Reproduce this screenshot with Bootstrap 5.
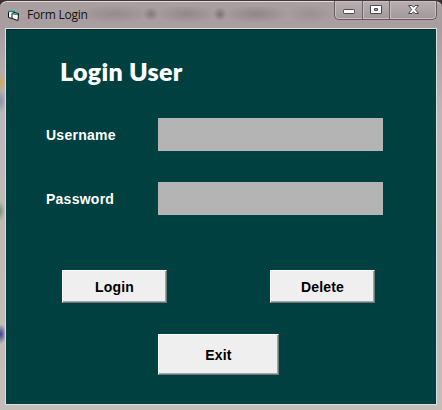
<!DOCTYPE html>
<html lang="en">
<head>
<meta charset="utf-8">
<meta name="viewport" content="width=device-width, initial-scale=1">
<title>Form Login</title>
<link href="https://cdn.jsdelivr.net/npm/bootstrap@5.3.0/dist/css/bootstrap.min.css" rel="stylesheet">
<style>
  body { width: 442px; height: 410px; background: #3b3032; font-family: "Liberation Sans", Arial, sans-serif; }
  .form-window {
    width: 442px; height: 410px; padding: 0 5px 5px; border-top: 1px solid #40373a;
    border-radius: 7px 7px 0 0; box-shadow: inset 0 1px 0 #e4dcdc;
    background:
      radial-gradient(ellipse 5px 9px at 0 82px, #d8a545, transparent),
      radial-gradient(ellipse 5px 10px at 0 210px, #7a9474, transparent),
      radial-gradient(ellipse 5px 10px at 1px 333px, #40428c, transparent),
      radial-gradient(ellipse 5px 12px at 1px 100px, #9093a5, transparent),
      radial-gradient(ellipse 38px 9px at 115px 13px, #958b8d, transparent),
      radial-gradient(ellipse 8px 7px at 151px 13px, #827879, transparent),
      radial-gradient(ellipse 32px 9px at 186px 13px, #928889, transparent),
      radial-gradient(ellipse 7px 7px at 220px 13px, #7c7273, transparent),
      radial-gradient(ellipse 34px 9px at 256px 13px, #908687, transparent),
      radial-gradient(ellipse 24px 9px at 310px 13px, #999091, transparent),
      linear-gradient(180deg, #a99fa0 0, #a89e9f 28px, #bdb8b8 110px, #c0bab7 240px, #c5bdba 100%);
  }
  .title-strip { height: 27px; padding-left: 2px; }
  .title-text { font: 12px/16px "Open Sans", "Noto Sans", sans-serif; letter-spacing: -.22px; color: #111; margin: 6px 0 0 7px; }
  .app-icon { margin-top: 8px; }
  .caption-group { width: 103px; height: 19px; border: 1px solid #655c5e; border-top: 0; border-radius: 0 0 5px 5px; box-shadow: inset 0 0 0 1px #c9c0c1; background: linear-gradient(#b9afb0, #a1989a); }
  .caption-group svg { display: block; }
  .client { width: 432px; height: 377px; background: #004040; border: 1px solid #dedede; border-top-color: #e7e0e0; box-shadow: inset 0 1px 0 #002d2d; }
  .heading { font: 800 25px/30px Lato, "Gill Sans MT", sans-serif; letter-spacing: .3px; color: #fff; padding: 27px 0 0 54px; height: 89px; }
  .entry { height: 33px; padding-left: 40px; }
  .entry label { width: 112px; color: #fff; font-weight: bold; font-size: 14px; line-height: 16px; letter-spacing: .25px; }
  .entry .form-control { width: 225px; height: 33px; background: #b4b4b4; border: 0; box-shadow: none; }
  .entry-gap { margin-top: 31px; }
  .actions { margin: 55px 0 0 56px; gap: 103px; }
  .push {
    --bs-btn-padding-x: 0; --bs-btn-padding-y: 0; --bs-btn-border-radius: 0;
    width: 105px; height: 33px; background: #efefef; color: #000; font-weight: bold; font-size: 14px; line-height: 16px; letter-spacing: .2px;
    border: 1px solid; border-color: #fff #69797a #69797a #fff; box-shadow: inset -1px -1px 0 #a5a5a5;
  }
  .push-wide { width: 121px; height: 41px; margin: 31px 0 0 152px; }
</style>
</head>
<body class="overflow-hidden">
<main class="form-window">
  <header class="title-strip d-flex align-items-start">
    <svg class="app-icon flex-shrink-0" width="13" height="13" viewBox="0 0 13 13" aria-hidden="true">
      <path d="M1.500 2.500h6v6l-2 1-4-1Z" fill="#fff" stroke="#111"/>
      <path d="M1 2.500h7" stroke="#168b8b" stroke-width="1.500"/>
      <path d="M5 4.500 7 3.500l4.500 1-.5 7-6-2Z" fill="#fff" stroke="#111"/>
      <path d="M5.500 4.800 11 5.600" stroke="#168b8b" stroke-width="1.400"/>
    </svg>
    <span class="title-text">Form Login</span>
    <div class="caption-group ms-auto">
      <svg width="101" height="18" viewBox="0 0 101 18" aria-label="Window controls">
        <path d="M27.5 0v18M54.5 0v18" stroke="#6d6466"/>
        <path d="M28.5 1v16M55.5 1v16" stroke="#c5bcbd"/>
        <rect x="8.5" y="8.500" width="11" height="4" rx=".7" fill="#fff" stroke="#4d4b56"/>
        <path fill-rule="evenodd" d="M35.5 4.5h11v8h-11zM39.500 7.500h3v2h-3z" fill="#fff" stroke="#4d4b56"/>
        <path d="M73.500 4.500h3.500l1.500 1.800 1.500-1.800h3.500l-3.200 4 3.200 4H80l-1.500-1.800-1.500 1.800h-3.500l3.200-4Z" fill="#fff" stroke="#4d4b56"/>
      </svg>
    </div>
  </header>
  <form class="client">
    <h1 class="heading m-0">Login User</h1>
    <div class="entry d-flex align-items-center">
      <label for="username">Username</label>
      <input id="username" class="form-control rounded-0" type="text">
    </div>
    <div class="entry entry-gap d-flex align-items-center">
      <label for="password">Password</label>
      <input id="password" class="form-control rounded-0" type="password">
    </div>
    <div class="actions d-flex">
      <button class="btn push" type="button">Login</button>
      <button class="btn push" type="button">Delete</button>
    </div>
    <button class="btn push push-wide d-block" type="button">Exit</button>
  </form>
</main>
<script src="https://cdn.jsdelivr.net/npm/bootstrap@5.3.0/dist/js/bootstrap.bundle.min.js"></script>
</body>
</html>
